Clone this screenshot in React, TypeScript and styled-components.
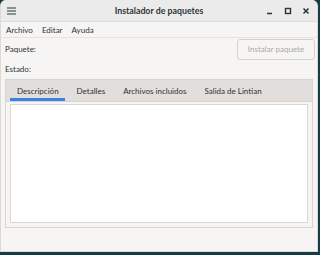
import styled, { createGlobalStyle } from 'styled-components';

const GlobalStyle = createGlobalStyle`
  html, body {
    margin: 0;
    padding: 0;
    background: #163c46;
    width: 320px;
    height: 255px;
    overflow: hidden;
  }
  * { box-sizing: border-box; }
`;

const Window = styled.div`
  width: 318px;
  height: 252px;
  background: #f6f5f4;
  border-radius: 6px 6px 0 0;
  border: 1px solid #dcdad7;
  border-top: none;
  display: flex;
  flex-direction: column;
  font-family: Lato, "Noto Sans", sans-serif;
  font-size: 8px;
  color: #2e3436;
  overflow: hidden;
`;

const TitleBar = styled.div`
  height: 22px;
  background: #ebebeb;
  display: grid;
  grid-template-columns: 60px 1fr 60px;
  align-items: center;
  border-bottom: 1px solid #dedcda;
`;

const Title = styled.div`
  text-align: center;
  font-weight: 700;
  font-size: 8.8px;
`;

const Controls = styled.div`
  display: flex;
  justify-content: flex-end;
  align-items: center;
  gap: 10px;
  padding-right: 7px;
`;

const IconSlot = styled.div`
  width: 8px;
  height: 8px;
  display: flex;
  align-items: center;
  justify-content: center;
`;

const MenuButton = styled.div`
  padding-left: 6px;
  display: flex;
  align-items: center;
`;

const MenuBar = styled.div`
  height: 16px;
  display: flex;
  align-items: center;
  gap: 9px;
  padding-left: 5px;
  border-bottom: 1px solid #e6e4e1;
`;

const MenuItem = styled.span``;

const Header = styled.div`
  display: grid;
  grid-template-columns: 1fr auto;
  grid-template-rows: 20px 19px;
  padding: 1px 2px 0 4px;
  align-items: center;
`;

const Label = styled.span``;

const InstallButton = styled.button`
  grid-row: 1;
  grid-column: 2;
  height: 21px;
  width: 78px;
  border: 1px solid #d6d3cf;
  border-radius: 3px;
  background: #f6f5f4;
  color: #a9aaa7;
  font: inherit;
  padding: 0;
`;

const Notebook = styled.div`
  margin: 1px 4px 0 4px;
  height: 149px;
  border: 1px solid #d8d4d0;
  display: flex;
  flex-direction: column;
`;

const TabBar = styled.div`
  height: 22px;
  background: #e1dedb;
  display: flex;
  align-items: stretch;
  padding-left: 4px;
  border-bottom: 1px solid #d8d4d0;
`;

const Tab = styled.div<{ $active?: boolean }>`
  display: flex;
  align-items: center;
  padding: 0 6px 0 7px;
  margin-right: 5px;
  color: #2e3436;
  box-shadow: ${p => (p.$active ? 'inset 0 -3px 0 #3584e4' : 'none')};
`;

const Page = styled.div`
  flex: 1;
  padding: 2px 4px 4px 4px;
  background: #f6f5f4;
  display: flex;
`;

const TextArea = styled.div`
  flex: 1;
  background: #ffffff;
  border: 1px solid #dad7d3;
`;

export default function App() {
  return (
    <>
      <GlobalStyle />
      <Window>
        <TitleBar>
          <MenuButton>
            <svg width="9" height="8" viewBox="0 0 9 8">
              <path d="M0 1h9M0 4h9M0 7h9" stroke="#2e3436" strokeWidth="1.2" />
            </svg>
          </MenuButton>
          <Title>Instalador de paquetes</Title>
          <Controls>
            <IconSlot>
              <svg width="8" height="8" viewBox="0 0 8 8">
                <path d="M1 6.5h5" stroke="#2e3436" strokeWidth="1.5" />
              </svg>
            </IconSlot>
            <IconSlot>
              <svg width="8" height="8" viewBox="0 0 8 8">
                <rect x="1.5" y="1.5" width="5" height="5" fill="none" stroke="#2e3436" strokeWidth="1.4" />
              </svg>
            </IconSlot>
            <IconSlot>
              <svg width="8" height="8" viewBox="0 0 8 8">
                <path d="M1.5 1.5l5 5M6.5 1.5l-5 5" stroke="#2e3436" strokeWidth="1.5" />
              </svg>
            </IconSlot>
          </Controls>
        </TitleBar>
        <MenuBar>
          <MenuItem>Archivo</MenuItem>
          <MenuItem>Editar</MenuItem>
          <MenuItem>Ayuda</MenuItem>
        </MenuBar>
        <Header>
          <Label>Paquete:</Label>
          <InstallButton disabled>Instalar paquete</InstallButton>
          <Label>Estado:</Label>
        </Header>
        <Notebook>
          <TabBar>
            <Tab $active>Descripción</Tab>
            <Tab>Detalles</Tab>
            <Tab>Archivos incluidos</Tab>
            <Tab>Salida de Lintian</Tab>
          </TabBar>
          <Page>
            <TextArea />
          </Page>
        </Notebook>
      </Window>
    </>
  );
}
